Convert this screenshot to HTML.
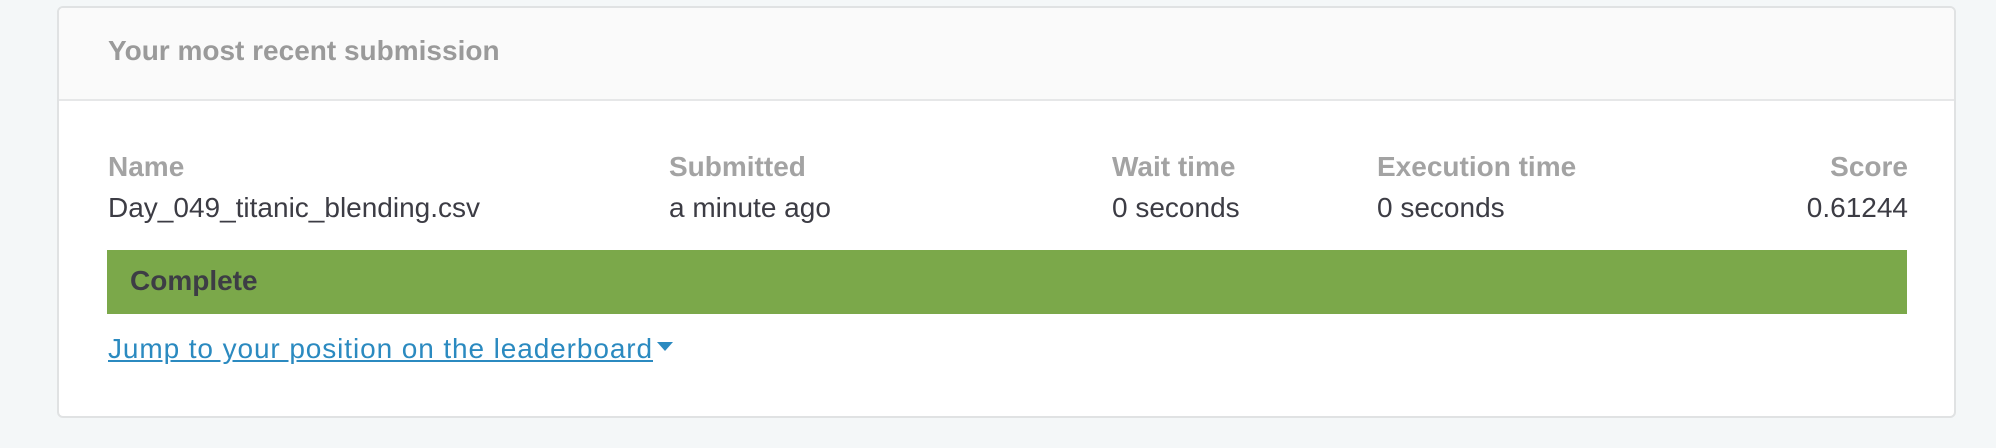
<!DOCTYPE html>
<html><head><style>
html,body{margin:0;padding:0;width:1996px;height:448px;background:#f4f7f8;overflow:hidden;font-family:"Liberation Sans",sans-serif}
.card{position:absolute;left:57px;top:6px;width:1895px;height:408px;background:#fff;border:2px solid #e0e2e3;border-radius:6px;overflow:hidden}
.hdr{position:absolute;left:0;top:0;right:0;height:91px;background:#fafafa;border-bottom:2px solid #e6e7e8}
.t{position:absolute;white-space:nowrap}
.title{left:49px;top:27px;font-size:28px;font-weight:bold;color:#9a9a9a}
.lab{font-size:28px;font-weight:bold;color:#a3a3a3;top:143px}
.val{font-size:28px;color:#3c3c44;top:184px}
.bar{position:absolute;left:48px;top:242px;width:1800px;height:64px;background:#7ba84a}
.bar span{position:absolute;left:23px;top:15px;font-size:28px;font-weight:bold;color:#3d3d45}
.link{left:49px;top:325px;font-size:28px;color:#2b8ac0;text-decoration:underline;letter-spacing:0.9px}
</style></head><body>
<div class="card">
<div class="hdr"></div>
<div class="t title">Your most recent submission</div>
<div class="t lab" style="left:49px">Name</div>
<div class="t lab" style="left:610px">Submitted</div>
<div class="t lab" style="left:1053px">Wait time</div>
<div class="t lab" style="left:1318px">Execution time</div>
<div class="t lab" style="right:46px">Score</div>
<div class="t val" style="left:49px">Day_049_titanic_blending.csv</div>
<div class="t val" style="left:610px">a minute ago</div>
<div class="t val" style="left:1053px">0 seconds</div>
<div class="t val" style="left:1318px">0 seconds</div>
<div class="t val" style="right:46px">0.61244</div>
<div class="bar"><span>Complete</span></div>
<div class="t link">Jump to your position on the leaderboard</div>
<svg style="position:absolute;left:598px;top:334px" width="17" height="11"><path d="M0 0H16L8 9Z" fill="#2b8ac0"/></svg>
</div>
</body></html>
